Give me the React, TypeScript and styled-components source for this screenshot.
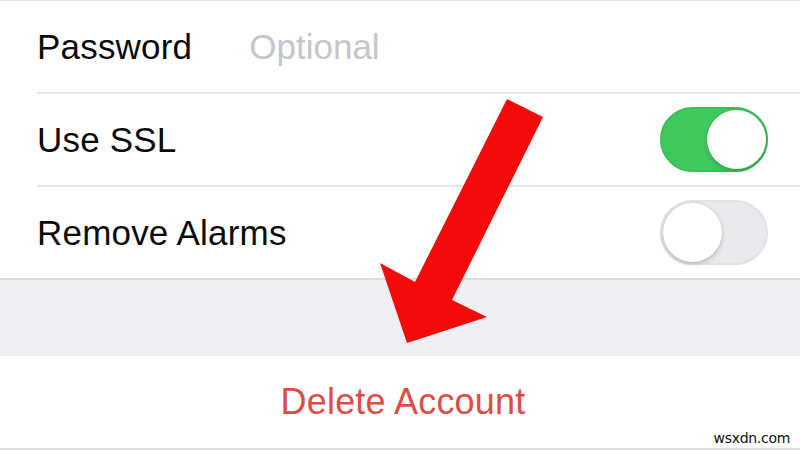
import styled, { createGlobalStyle } from 'styled-components';

const GlobalStyle = createGlobalStyle`
    html, body {
        margin: 0;
        padding: 0;
        background: #ffffff;
    }
    body {
        font-family: 'Liberation Sans', Arial, sans-serif;
        -webkit-font-smoothing: antialiased;
    }
`;

const Screen = styled.div`
    position: relative;
    width: 800px;
    height: 450px;
    overflow: hidden;
    background: #ffffff;
`;

const Group = styled.div`
    background: #ffffff;
    border-top: 1px solid #e4e4e8;
    border-bottom: 2px solid #dcdce0;
`;

const Row = styled.div<{ last?: boolean }>`
    height: 91px;
    margin-left: 37px;
    padding-right: 32px;
    display: flex;
    align-items: center;
    border-bottom: ${({ last }) => (last ? 'none' : '2px solid #e6e6ea')};
`;

const Label = styled.span`
    font-size: 35px;
    color: #0a0a0a;
    letter-spacing: 0.2px;
    flex: 0 0 auto;
`;

const Placeholder = styled.span`
    font-size: 35px;
    color: #c6c6ca;
    margin-left: 57px;
`;

const Spacer = styled.div`
    flex: 1;
`;

const Track = styled.div<{ on: boolean }>`
    position: relative;
    width: 108px;
    height: 65px;
    border-radius: 33px;
    box-sizing: border-box;
    background: ${({ on }) => (on ? '#3fc95d' : '#e9e9ec')};
    border: 2px solid ${({ on }) => (on ? '#3bbd57' : '#e2e2e6')};
`;

const Knob = styled.div<{ on: boolean }>`
    position: absolute;
    top: 1px;
    left: ${({ on }) => (on ? '45px' : '1px')};
    width: 59px;
    height: 59px;
    border-radius: 50%;
    background: #ffffff;
    box-shadow: 0 2px 5px rgba(0, 0, 0, 0.2), 0 0 1px rgba(0, 0, 0, 0.15);
`;

const Gap = styled.div`
    height: 76px;
    background: #efeff4;
`;

const ActionRow = styled.div`
    height: 92px;
    display: flex;
    align-items: center;
    justify-content: center;
    background: #ffffff;
    border-bottom: 2px solid #dcdce0;
`;

const DangerText = styled.span`
    font-size: 36px;
    color: #de4d45;
    letter-spacing: 0.2px;
    margin-left: 6px;
`;

const Arrow = styled.svg`
    position: absolute;
    left: 0;
    top: 0;
    pointer-events: none;
`;

const Watermark = styled.span`
    position: absolute;
    right: 10px;
    bottom: 4px;
    font-family: 'DejaVu Sans', Arial, sans-serif;
    font-size: 14px;
    color: #111111;
    letter-spacing: -0.3px;
`;

const Toggle = ({ on }: { on: boolean }) => (
    <Track on={on}>
        <Knob on={on} />
    </Track>
);

const App = () => {
    return (
        <>
            <GlobalStyle />
            <Screen>
                <Group>
                    <Row>
                        <Label>Password</Label>
                        <Placeholder>Optional</Placeholder>
                    </Row>
                    <Row>
                        <Label>Use SSL</Label>
                        <Spacer />
                        <Toggle on />
                    </Row>
                    <Row last>
                        <Label>Remove Alarms</Label>
                        <Spacer />
                        <Toggle on={false} />
                    </Row>
                </Group>
                <Gap />
                <ActionRow>
                    <DangerText>Delete Account</DangerText>
                </ActionRow>
                <Arrow width="800" height="450" viewBox="0 0 800 450">
                    <polygon
                        points="507,99 543,117 452,300 487,317 407,343 380,263 415,282"
                        fill="#f50a0a"
                    />
                </Arrow>
                <Watermark>wsxdn.com</Watermark>
            </Screen>
        </>
    );
};

export default App;
